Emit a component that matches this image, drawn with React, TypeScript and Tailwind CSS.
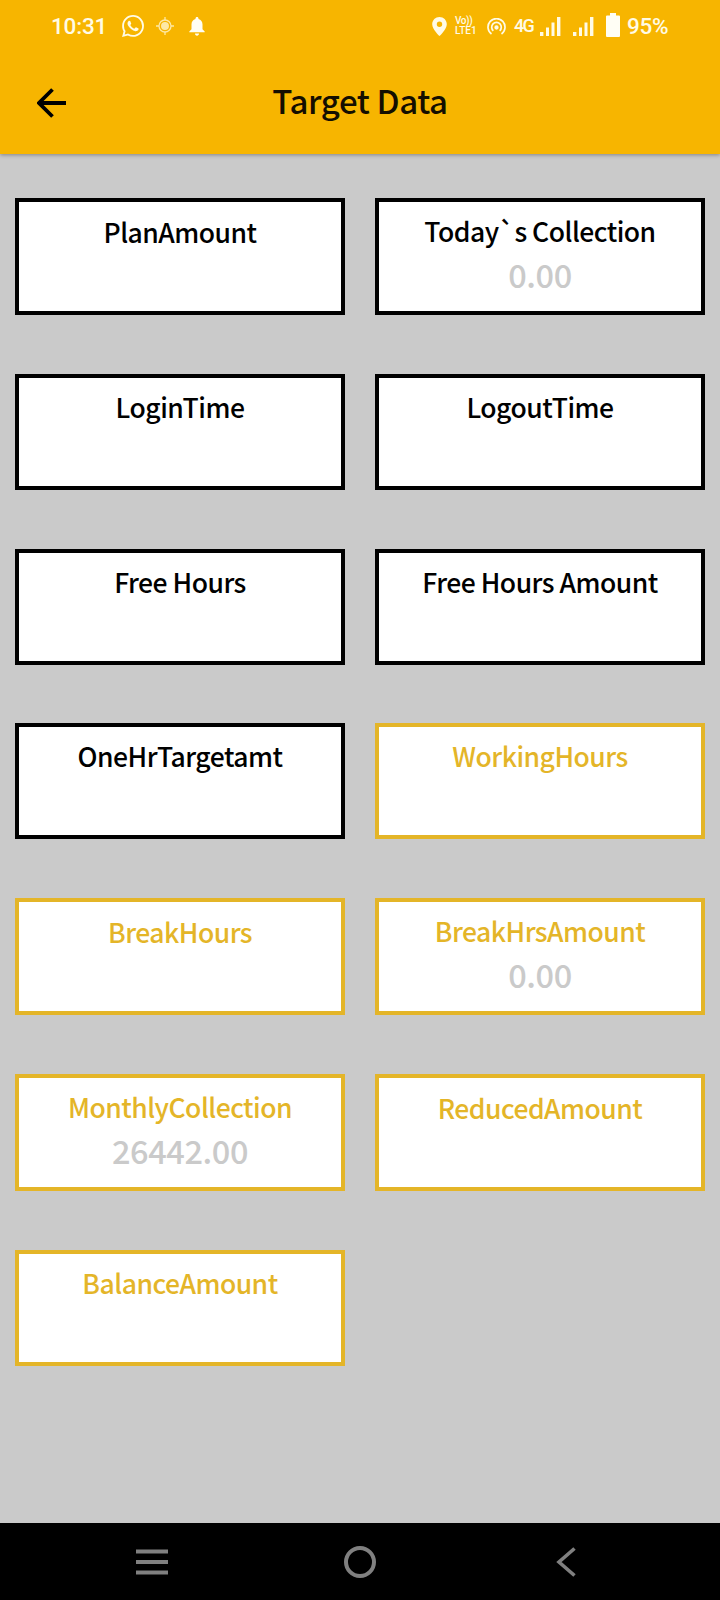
import React from 'react';

interface Card {
  label: string;
  value?: string;
  highlight?: boolean;
}

const CARDS: Card[] = [
  { label: 'PlanAmount' },
  { label: 'Today`s Collection', value: '0.00' },
  { label: 'LoginTime' },
  { label: 'LogoutTime' },
  { label: 'Free Hours' },
  { label: 'Free Hours Amount' },
  { label: 'OneHrTargetamt' },
  { label: 'WorkingHours', highlight: true },
  { label: 'BreakHours', highlight: true },
  { label: 'BreakHrsAmount', value: '0.00', highlight: true },
  { label: 'MonthlyCollection', value: '26442.00', highlight: true },
  { label: 'ReducedAmount', highlight: true },
  { label: 'BalanceAmount', highlight: true },
];

const SignalBars: React.FC<{ className?: string }> = ({ className }) => (
  <svg className={`w-[21px] h-[19px] shrink-0 ${className || ''}`} viewBox="0 0 21 19" fill="#fffbe6">
    <rect x="0" y="15" width="3.4" height="4" />
    <rect x="6" y="10.5" width="3" height="8.5" />
    <rect x="11.5" y="5.5" width="3" height="13.5" />
    <rect x="17" y="0" width="3.4" height="19" />
  </svg>
);

const StatusBar: React.FC = () => (
  <div className="flex items-center h-[52px] pl-[51px] pr-[51px] text-[#fffbe6] font-[Roboto,sans-serif]">
    <span className="text-[22.5px] leading-none font-medium w-[71px] tracking-[-0.2px]">10:31</span>
    {/* WhatsApp */}
    <svg className="w-[22px] h-[22px]" viewBox="0 0 24 24" fill="#fffbe6">
      <path d="M17.472 14.382c-.297-.149-1.758-.867-2.03-.967-.273-.099-.471-.148-.67.15-.197.297-.767.966-.94 1.164-.173.199-.347.223-.644.075-.297-.15-1.255-.463-2.39-1.475-.883-.788-1.48-1.761-1.653-2.059-.173-.297-.018-.458.13-.606.134-.133.298-.347.446-.52.149-.174.198-.298.298-.497.099-.198.05-.371-.025-.52-.075-.149-.669-1.612-.916-2.207-.242-.579-.487-.5-.669-.51-.173-.008-.371-.01-.57-.01-.198 0-.52.074-.792.372-.272.297-1.04 1.016-1.04 2.479 0 1.462 1.065 2.875 1.213 3.074.149.198 2.096 3.2 5.077 4.487.709.306 1.262.489 1.694.625.712.227 1.36.195 1.871.118.571-.085 1.758-.719 2.006-1.413.248-.694.248-1.289.173-1.413-.074-.124-.272-.198-.57-.347m-5.421 7.403h-.004a9.87 9.87 0 01-5.031-1.378l-.361-.214-3.741.982.998-3.648-.235-.374a9.86 9.86 0 01-1.51-5.26c.001-5.45 4.436-9.884 9.888-9.884 2.64 0 5.122 1.03 6.988 2.898a9.825 9.825 0 012.893 6.994c-.003 5.45-4.437 9.884-9.885 9.884m8.413-18.297A11.815 11.815 0 0012.05 0C5.495 0 .16 5.335.157 11.892c0 2.096.547 4.142 1.588 5.945L.057 24l6.305-1.654a11.882 11.882 0 005.683 1.448h.005c6.554 0 11.89-5.335 11.893-11.893a11.821 11.821 0 00-3.48-8.413z" />
    </svg>
    {/* Location in use */}
    <svg className="w-[18px] h-[18px] ml-[12px]" viewBox="0 0 18 18" fill="none" stroke="#fde9a6" strokeWidth="1.3">
      <circle cx="9" cy="9" r="6" />
      <circle cx="9" cy="9" r="3.3" fill="#fde9a6" />
      <path d="M9 0v3M9 15v3M0 9h3M15 9h3" />
    </svg>
    <svg className="w-[16px] h-[19px] ml-[15px]" viewBox="0 0 16 19" fill="#fffef5">
      <path d="M8 0c.9 0 1.5.6 1.5 1.5v.6c2.5.6 4 2.8 4 5.5v4.6l2.2 2.3v.8H.3v-.8l2.200-2.300V7.600c0-2.700 1.500-4.900 4-5.500v-.6C6.500.6 7.100 0 8 0zM6 16.500h4c0 1.300-.8 2.200-2 2.200s-2-.9-2-2.200z" />
    </svg>

    <svg className="w-[15px] h-[19px] ml-auto" viewBox="0 0 15 19" fill="#fffbe6">
      <path fillRule="evenodd" d="M7.5 0C3.4 0 .2 3.2.2 7.2.2 12.4 7.5 19 7.5 19s7.3-6.6 7.3-11.8C14.8 3.2 11.6 0 7.5 0zm0 4.6a2.7 2.7 0 110 5.4 2.7 2.7 0 010-5.4z" />
    </svg>
    <div className="flex flex-col ml-[8px] w-[24px] text-[10px] leading-[10px] font-medium">
      <span className="tracking-[-0.4px]">Vo))</span>
      <span className="whitespace-nowrap">LTE1</span>
    </div>
    {/* Hotspot */}
    <svg className="w-[19px] h-[17px] ml-[8px]" viewBox="0 0 19 17" fill="none" stroke="#fffbe6" strokeWidth="1.7">
      <path d="M4.500 16A8.500 8.500 0 1114.500 16" />
      <path d="M6.300 12.800a4.800 4.800 0 116.400 0" />
      <circle cx="9.5" cy="9.5" r="1.3" fill="#fffbe6" />
    </svg>
    <span className="ml-[8px] w-[20px] text-[18px] leading-none tracking-[-1.7px] font-medium">4G</span>
    <SignalBars className="ml-[6px]" />
    <SignalBars className="ml-[12px]" />
    <svg className="w-[14px] h-[24px] ml-[12px] mb-[2px]" viewBox="0 0 14 24" fill="#fffef5">
      <path d="M4 0h6v2.500h3a1 1 0 011 1V23a1 1 0 01-1 1H1a1 1 0 01-1-1V3.500a1 1 0 011-1h3z" />
    </svg>
    <span className="ml-[7px] w-[42px] text-[22.5px] leading-none tracking-[-0.3px] font-medium">95%</span>
  </div>
);

const TargetCard: React.FC<{ card: Card }> = ({ card }) => (
  <div
    className={`flex flex-col items-center justify-center border-4 bg-white ${
      card.highlight ? 'border-[#e4b528] text-[#e4b528]' : 'border-black text-black'
    }`}
  >
    <span className="text-[26.5px] leading-[40px] tracking-[-0.5px] whitespace-pre">{card.label}</span>
    <span
      className={`text-[32.5px] leading-[46px] tracking-[-0.4px] text-[#cacaca] ${
        card.value ? 'h-[52px]' : 'h-[50px]'
      }`}
    >
      {card.value}
    </span>
  </div>
);

const App: React.FC = () => {
  return (
    <div className="flex flex-col w-[720px] h-[1600px] overflow-hidden bg-[#cacaca] font-['Noto_Sans_CJK_SC',sans-serif] font-medium">
      <header className="h-[154px] shrink-0 bg-[#f7b500] shadow-[0_1px_4px_rgba(0,0,0,0.35)]">
        <StatusBar />
        <div className="grid grid-cols-[100px_1fr_100px] items-center h-[102px]">
          <svg className="w-[30px] h-[30px] ml-[37px] mb-[1px]" viewBox="0 0 30 30" fill="none" stroke="#000" strokeWidth="3.8">
            <path d="M29 15H3M15.500 1.500L2 15l13.500 13.500" />
          </svg>
          <h1 className="text-center text-[33px] leading-[50px] tracking-[-0.4px] pb-[6px] text-[#140e00]">Target Data</h1>
        </div>
      </header>

      <main className="grid grid-cols-2 grid-rows-[117.3px_116px_116px_116px_117.3px_117.3px_116px] content-start gap-x-[30px] gap-y-[58.7px] px-[15px] pt-[44px] flex-1">
        {CARDS.map((card) => (
          <TargetCard key={card.label} card={card} />
        ))}
      </main>

      <nav className="flex items-center h-[77px] shrink-0 bg-black">
        <svg className="w-[32px] h-[26px] ml-[136px]" viewBox="0 0 32 26" stroke="#808080" strokeWidth="4">
          <path d="M0 2.500h32M0 13h32M0 23.500h32" />
        </svg>
        <svg className="w-[32px] h-[32px] ml-[176px]" viewBox="0 0 32 32" fill="none" stroke="#808080" strokeWidth="4">
          <circle cx="16" cy="16" r="14" />
        </svg>
        <svg className="w-[20px] h-[30px] ml-[180px]" viewBox="0 0 20 30" fill="none" stroke="#808080" strokeWidth="3.6">
          <path d="M18.500 1.500L3 15l15.500 13.500" />
        </svg>
      </nav>
    </div>
  );
};

export default App;
